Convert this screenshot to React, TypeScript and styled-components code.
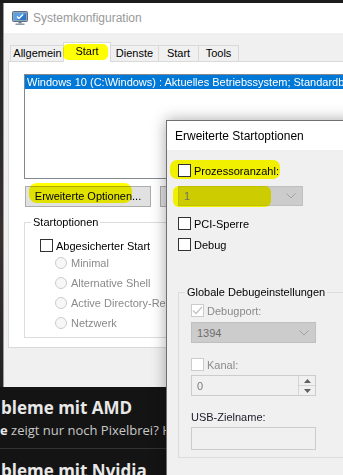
import React from "react";
import styled, { createGlobalStyle } from "styled-components";

const GlobalStyle = createGlobalStyle`
  html, body { margin: 0; padding: 0; background: #141414; }
  body { font-family: "Liberation Sans", Arial, sans-serif; }
  * { box-sizing: border-box; }
`;

const Screen = styled.div`
  position: relative;
  width: 343px;
  height: 475px;
  overflow: hidden;
  background: #141414;
`;

const TopEdge = styled.div`
  height: 3px;
  background: #1c1c1c;
`;

const WindowRow = styled.div`
  display: flex;
`;

const LeftEdge = styled.div`
  width: 3px;
  flex: none;
  background: linear-gradient(#222 0, #2a2a2a 30%, #3a3030 60%, #222 100%);
`;

const MainWindow = styled.div`
  flex: none;
  width: 420px;
  height: 384px;
  background: #f0f0f0;
  border-left: 1px solid #9a9a9a;
  display: flex;
  flex-direction: column;
`;

const TitleBar = styled.div`
  height: 30px;
  flex: none;
  background: #fff;
  display: flex;
  align-items: center;
  gap: 5px;
  padding-left: 8px;
`;

const TitleText = styled.span<{ $active?: boolean }>`
  font-size: 12px;
  color: ${(p) => (p.$active ? "#000" : "#999")};
`;

const WindowBody = styled.div`
  flex: 1;
  padding-top: 9px;
`;

const TabRow = styled.div`
  display: flex;
  align-items: flex-end;
  height: 20px;
  padding-left: 6px;
`;

const Tab = styled.div<{ $w: number }>`
  width: ${(p) => p.$w}px;
  height: 17px;
  margin-right: -1px;
  border: 1px solid #d9d9d9;
  border-bottom: none;
  background: #f0f0f0;
  font-size: 11px;
  line-height: 15px;
  text-align: center;
  color: #000;
`;

const SelectedTab = styled(Tab)`
  position: relative;
  z-index: 2;
  height: 20px;
  margin-left: -1px;
  background: #fff;
  line-height: 17px;
`;

const Lifted = styled.span`
  position: relative;
`;

const Marker = styled.span`
  position: absolute;
  background: #ffff00;
  mix-blend-mode: multiply;
  border-radius: 5px;
  pointer-events: none;
`;

const TabPage = styled.div`
  position: relative;
  z-index: 1;
  margin: -1px 0 0 4px;
  width: 500px;
  height: 287px;
  background: #fff;
  border: 1px solid #d9d9d9;
  padding: 12px 0 0 15px;
`;

const ListBox = styled.div`
  width: 400px;
  height: 105px;
  background: #fff;
  border: 1px solid #828790;
`;

const ListItem = styled.div<{ $selected?: boolean }>`
  height: 14px;
  padding-left: 2px;
  font-size: 11px;
  line-height: 14px;
  white-space: nowrap;
  color: ${(p) => (p.$selected ? "#fff" : "#000")};
  background: ${(p) => (p.$selected ? "#0078d7" : "transparent")};
`;

const ButtonRow = styled.div`
  display: flex;
  gap: 9px;
  margin: 7px 0 0 1px;
`;

const Button = styled.div`
  position: relative;
  width: 126px;
  height: 21px;
  background: #e1e1e1;
  border: 1px solid #adadad;
  font-size: 11px;
  line-height: 19px;
  text-align: center;
  color: #000;
`;

const GroupBox = styled.div<{ $w: number; $h: number; $mt: number; $pl: number; $bg: string }>`
  width: ${(p) => p.$w}px;
  height: ${(p) => p.$h}px;
  margin-top: ${(p) => p.$mt}px;
  padding-left: ${(p) => p.$pl}px;
  border: 1px solid #dcdcdc;
  --legend-bg: ${(p) => p.$bg};
`;

const LegendWrap = styled.div<{ $indent: number }>`
  margin-left: ${(p) => p.$indent}px;
`;

const Legend = styled.div`
  width: fit-content;
  height: 13px;
  margin-top: -7px;
  padding: 0 2px;
  background: var(--legend-bg);
  font-size: 11px;
  line-height: 13px;
  color: #000;
`;

const CheckRow = styled.div<{ $mt: number; $disabled?: boolean }>`
  position: relative;
  display: flex;
  align-items: center;
  gap: 3px;
  height: 13px;
  margin-top: ${(p) => p.$mt}px;
  font-size: 11px;
  color: ${(p) => (p.$disabled ? "#8a8a8a" : "#000")};
`;

const Box = styled.span<{ $disabled?: boolean }>`
  position: relative;
  width: 13px;
  height: 13px;
  flex: none;
  background: #fff;
  border: 1px solid ${(p) => (p.$disabled ? "#cccccc" : "#333")};
  display: flex;
  align-items: center;
  justify-content: center;
`;

const RadioRow = styled.div<{ $first?: boolean }>`
  display: flex;
  align-items: center;
  gap: 4px;
  height: 20px;
  margin-top: ${(p) => (p.$first ? 1 : 0)}px;
  padding-left: 15px;
  font-size: 11px;
  color: #8a8a8a;
  white-space: nowrap;
`;

const RadioDot = styled.span`
  width: 12px;
  height: 12px;
  flex: none;
  border-radius: 50%;
  border: 1px solid #cccccc;
  background: #f7f7f7;
`;

const Combo = styled.div<{ $mt: number; $h: number }>`
  position: relative;
  width: 125px;
  height: ${(p) => p.$h}px;
  margin-top: ${(p) => p.$mt}px;
  background: #cccccc;
  border: 1px solid #bfbfbf;
  display: flex;
  align-items: center;
  justify-content: space-between;
  padding: 0 6px 0 5px;
  font-size: 11px;
  color: #6d6d6d;
`;

const Field = styled.div<{ $mt: number; $h: number }>`
  width: 125px;
  height: ${(p) => p.$h}px;
  margin-top: ${(p) => p.$mt}px;
  background: #f0f0f0;
  border: 1px solid #cccccc;
  display: flex;
  align-items: center;
  padding-left: 5px;
  font-size: 11px;
  color: #7a7a7a;
`;

const SpinText = styled.span`
  flex: 1;
`;

const SpinButtons = styled.div`
  width: 17px;
  height: 100%;
  display: flex;
  flex-direction: column;
  border-left: 1px solid #d4d4d4;
`;

const SpinHalf = styled.div`
  flex: 1;
  display: flex;
  align-items: center;
  justify-content: center;
  & + & { border-top: 1px solid #d4d4d4; }
`;

const Label = styled.div<{ $mt: number }>`
  margin-top: ${(p) => p.$mt}px;
  height: 13px;
  font-size: 11px;
  line-height: 13px;
  color: #1a1a2a;
`;

const Dialog = styled.div`
  position: absolute;
  z-index: 10;
  left: 166px;
  top: 120px;
  width: 200px;
  height: 370px;
  background: #f0f0f0;
  border: 1px solid #707070;
  box-shadow: 0 0 14px rgba(0, 0, 0, 0.35);
  display: flex;
  flex-direction: column;
`;

const DialogTitle = styled(TitleBar)`
  height: 29px;
  padding-left: 8px;
`;

const DialogBody = styled.div`
  padding: 14px 0 0 11px;
`;

const Articles = styled.div`
  padding-top: 10px;
  color: #e8e8e8;
  font-family: "Open Sans", "Liberation Sans", sans-serif;
`;

const Headline = styled.div<{ $mt?: number }>`
  margin-top: ${(p) => p.$mt ?? 0}px;
  padding-left: 1px;
  font-size: 17px;
  font-weight: 700;
  line-height: 22px;
  white-space: nowrap;
`;

const Teaser = styled.div`
  margin-top: 2px;
  font-size: 13px;
  line-height: 18px;
  color: #c8c8c8;
  white-space: nowrap;
  b { color: #e8e8e8; }
`;

const Divider = styled.div`
  margin-top: 9px;
  height: 1px;
  background: #333;
`;

const AppIcon = () => (
  <svg width="16" height="16" viewBox="0 0 16 16">
    <rect x="0.5" y="1.5" width="15" height="10" rx="1" fill="#8fa3b8" stroke="#5c6f84" />
    <rect x="2" y="3" width="12" height="7" fill="#2f78c8" />
    <path d="M2 3h12L5 10H2z" fill="#5aa0e6" />
    <path d="M5 6.5l2 2 4-4" stroke="#fff" strokeWidth="1.3" fill="none" />
    <rect x="6.5" y="11.5" width="3" height="2" fill="#6c7c8c" />
    <rect x="3.5" y="13.5" width="9" height="1.5" fill="#8d99a6" />
  </svg>
);

const Chevron = () => (
  <svg width="10" height="6" viewBox="0 0 10 6">
    <path d="M0.5 0.5L5 5L9.5 0.5" stroke="#a0a0a0" fill="none" />
  </svg>
);

const Check = () => (
  <svg width="11" height="9" viewBox="0 0 11 9">
    <path d="M1 4.5L4 7.5L10 1" stroke="#c4c4c4" strokeWidth="1.3" fill="none" />
  </svg>
);

const Arrow = ({ up }: { up?: boolean }) => (
  <svg width="7" height="4" viewBox="0 0 7 4">
    <path d={up ? "M0 4L3.5 0L7 4z" : "M0 0L3.5 4L7 0z"} fill="#606060" />
  </svg>
);

export default function App() {
  const tabs = [
    { label: "Allgemein", w: 55 },
    { label: "Start", w: 48, selected: true },
    { label: "Dienste", w: 49 },
    { label: "Start", w: 41 },
    { label: "Tools", w: 41 },
  ];
  const radios = ["Minimal", "Alternative Shell", "Active Directory-Reparatur", "Netzwerk"];

  return (
    <Screen>
      <GlobalStyle />
      <TopEdge />
      <WindowRow>
        <LeftEdge />
        <MainWindow>
          <TitleBar>
            <AppIcon />
            <TitleText>Systemkonfiguration</TitleText>
          </TitleBar>
          <WindowBody>
            <TabRow>
              {tabs.map((t, i) =>
                t.selected ? (
                  <SelectedTab key={i} $w={t.w}>
                    <Marker style={{ left: -1, right: 2, top: 1, bottom: 2 }} />
                    <Lifted>{t.label}</Lifted>
                  </SelectedTab>
                ) : (
                  <Tab key={i} $w={t.w}>
                    {t.label}
                  </Tab>
                )
              )}
            </TabRow>
            <TabPage>
              <ListBox>
                <ListItem $selected>
                  Windows 10 (C:\Windows) : Aktuelles Betriebssystem; Standardbetriebssystem
                </ListItem>
              </ListBox>
              <ButtonRow>
                <Button>
                  <Marker style={{ left: 3, right: 18, top: -4, bottom: 3, borderRadius: 8 }} />
                  <Lifted>Erweiterte Optionen...</Lifted>
                </Button>
                <Button>Als Standard</Button>
              </ButtonRow>
              <GroupBox $w={400} $h={116} $mt={15} $pl={15} $bg="#fff">
                <LegendWrap $indent={-9}>
                  <Legend>Startoptionen</Legend>
                </LegendWrap>
                <CheckRow $mt={10}>
                  <Box />
                  Abgesicherter Start
                </CheckRow>
                {radios.map((r, i) => (
                  <RadioRow key={r} $first={i === 0}>
                    <RadioDot />
                    {r}
                  </RadioRow>
                ))}
              </GroupBox>
            </TabPage>
          </WindowBody>
        </MainWindow>
      </WindowRow>

      <Articles>
        <Headline>bleme mit AMD</Headline>
        <Teaser>
          <b>e</b> zeigt nur noch Pixelbrei? Hier
        </Teaser>
        <Divider />
        <Headline $mt={11}>bleme mit Nvidia</Headline>
      </Articles>

      <Dialog>
        <DialogTitle>
          <TitleText $active>Erweiterte Startoptionen</TitleText>
        </DialogTitle>
        <DialogBody>
          <CheckRow $mt={0}>
            <Marker style={{ left: -8, width: 110, top: -4, bottom: -2, borderRadius: 7 }} />
            <Box />
            <Lifted>Prozessoranzahl:</Lifted>
          </CheckRow>
          <Combo $mt={9} $h={20}>
            <Marker style={{ left: -6, width: 98, top: -1, bottom: -2, borderRadius: 6 }} />
            <Lifted>1</Lifted>
            <Chevron />
          </Combo>
          <CheckRow $mt={11}>
            <Box />
            PCI-Sperre
          </CheckRow>
          <CheckRow $mt={8}>
            <Box />
            Debug
          </CheckRow>
          <GroupBox $w={300} $h={166} $mt={41} $pl={12} $bg="#f0f0f0">
            <LegendWrap $indent={-6}>
              <Legend>Globale Debugeinstellungen</Legend>
            </LegendWrap>
            <CheckRow $mt={5} $disabled>
              <Box $disabled>
                <Check />
              </Box>
              Debugport:
            </CheckRow>
            <Combo $mt={5} $h={21}>
              1394
              <Chevron />
            </Combo>
            <CheckRow $mt={15} $disabled>
              <Box $disabled />
              Kanal:
            </CheckRow>
            <Field $mt={4} $h={21}>
              <SpinText>0</SpinText>
              <SpinButtons>
                <SpinHalf>
                  <Arrow up />
                </SpinHalf>
                <SpinHalf>
                  <Arrow />
                </SpinHalf>
              </SpinButtons>
            </Field>
            <Label $mt={15}>USB-Zielname:</Label>
            <Field $mt={3} $h={23} />
          </GroupBox>
        </DialogBody>
      </Dialog>
    </Screen>
  );
}
